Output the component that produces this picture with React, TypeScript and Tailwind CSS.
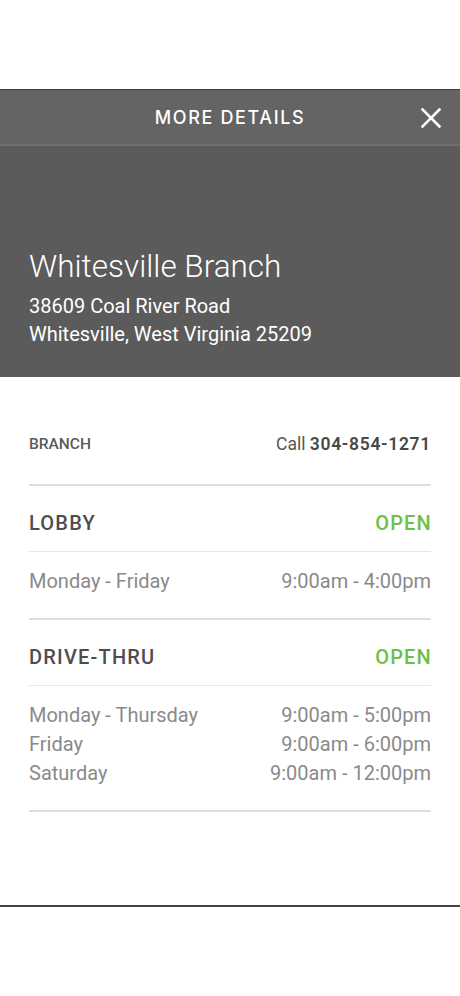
import React from "react";

const lobbyHours = [{ days: "Monday - Friday", time: "9:00am - 4:00pm" }];

const driveHours = [
  { days: "Monday - Thursday", time: "9:00am - 5:00pm" },
  { days: "Friday", time: "9:00am - 6:00pm" },
  { days: "Saturday", time: "9:00am - 12:00pm" },
];

const CloseIcon = () => (
  <svg width="20" height="20" viewBox="0 0 20 20" fill="none">
    <path d="M1.5 1.5L18.5 18.5M18.5 1.5L1.5 18.5" stroke="white" strokeWidth="2.6" strokeLinecap="square" />
  </svg>
);

const Section = ({ title, rows }: { title: string; rows: { days: string; time: string }[] }) => (
  <div className="border-b-2 border-[#dedede]">
    <div className="flex items-center justify-between pt-[25px] pb-[16px] border-b border-[#e6e6e6] text-[20px] leading-[24px] font-medium tracking-[0.06em]">
      <span className="text-[#4d4d4d]">{title}</span>
      <span className="text-[#6cc04a] mr-[-1px]">OPEN</span>
    </div>
    <div className="pt-[15px] pb-[22px]">
      {rows.map((r) => (
        <div key={r.days} className="flex justify-between text-[20px] leading-[29px] text-[#8a8a8a]">
          <span>{r.days}</span>
          <span>{r.time}</span>
        </div>
      ))}
    </div>
  </div>
);

export default function App() {
  return (
    <div className="w-[460px] h-[996px] bg-white" style={{ fontFamily: "Roboto, 'Noto Sans', sans-serif" }}>
      <div className="h-[89px]" />
      <div className="border-t border-[#3c3c3c]">
        <div className="relative h-[56px] bg-[#646464] border-b-2 border-[#6f6f6f] flex items-center justify-center">
          <span
            className="text-white text-[18px] font-medium tracking-[0.09em] pt-[1px]"
            style={{ fontFamily: "Inter, 'Open Sans', sans-serif" }}
          >
            MORE DETAILS
          </span>
          <button className="absolute right-[19px] top-[18px]">
            <CloseIcon />
          </button>
        </div>
        <div className="bg-[#5b5b5b] px-[29px] pt-[103px] pb-[29px] text-white">
          <div className="text-[31.5px] leading-[36px] font-light">Whitesville Branch</div>
          <div className="mt-[7px] text-[20px] leading-[28px]">
            <div>38609 Coal River Road</div>
            <div>Whitesville, West Virginia 25209</div>
          </div>
        </div>
        <div className="px-[29px] pb-[93px] border-b-2 border-[#444]">
          <div className="flex items-center justify-between pt-[55px] pb-[28px] border-b-2 border-[#dedede] leading-[24px]">
            <span className="text-[15.5px] font-medium text-[#5a5a5a]">BRANCH</span>
            <span className="text-[17.5px] text-[#555]">
              Call <span className="font-semibold text-[#484848] tracking-[0.04em]">304-854-1271</span>
            </span>
          </div>
          <Section title="LOBBY" rows={lobbyHours} />
          <Section title="DRIVE-THRU" rows={driveHours} />
        </div>
      </div>
    </div>
  );
}
